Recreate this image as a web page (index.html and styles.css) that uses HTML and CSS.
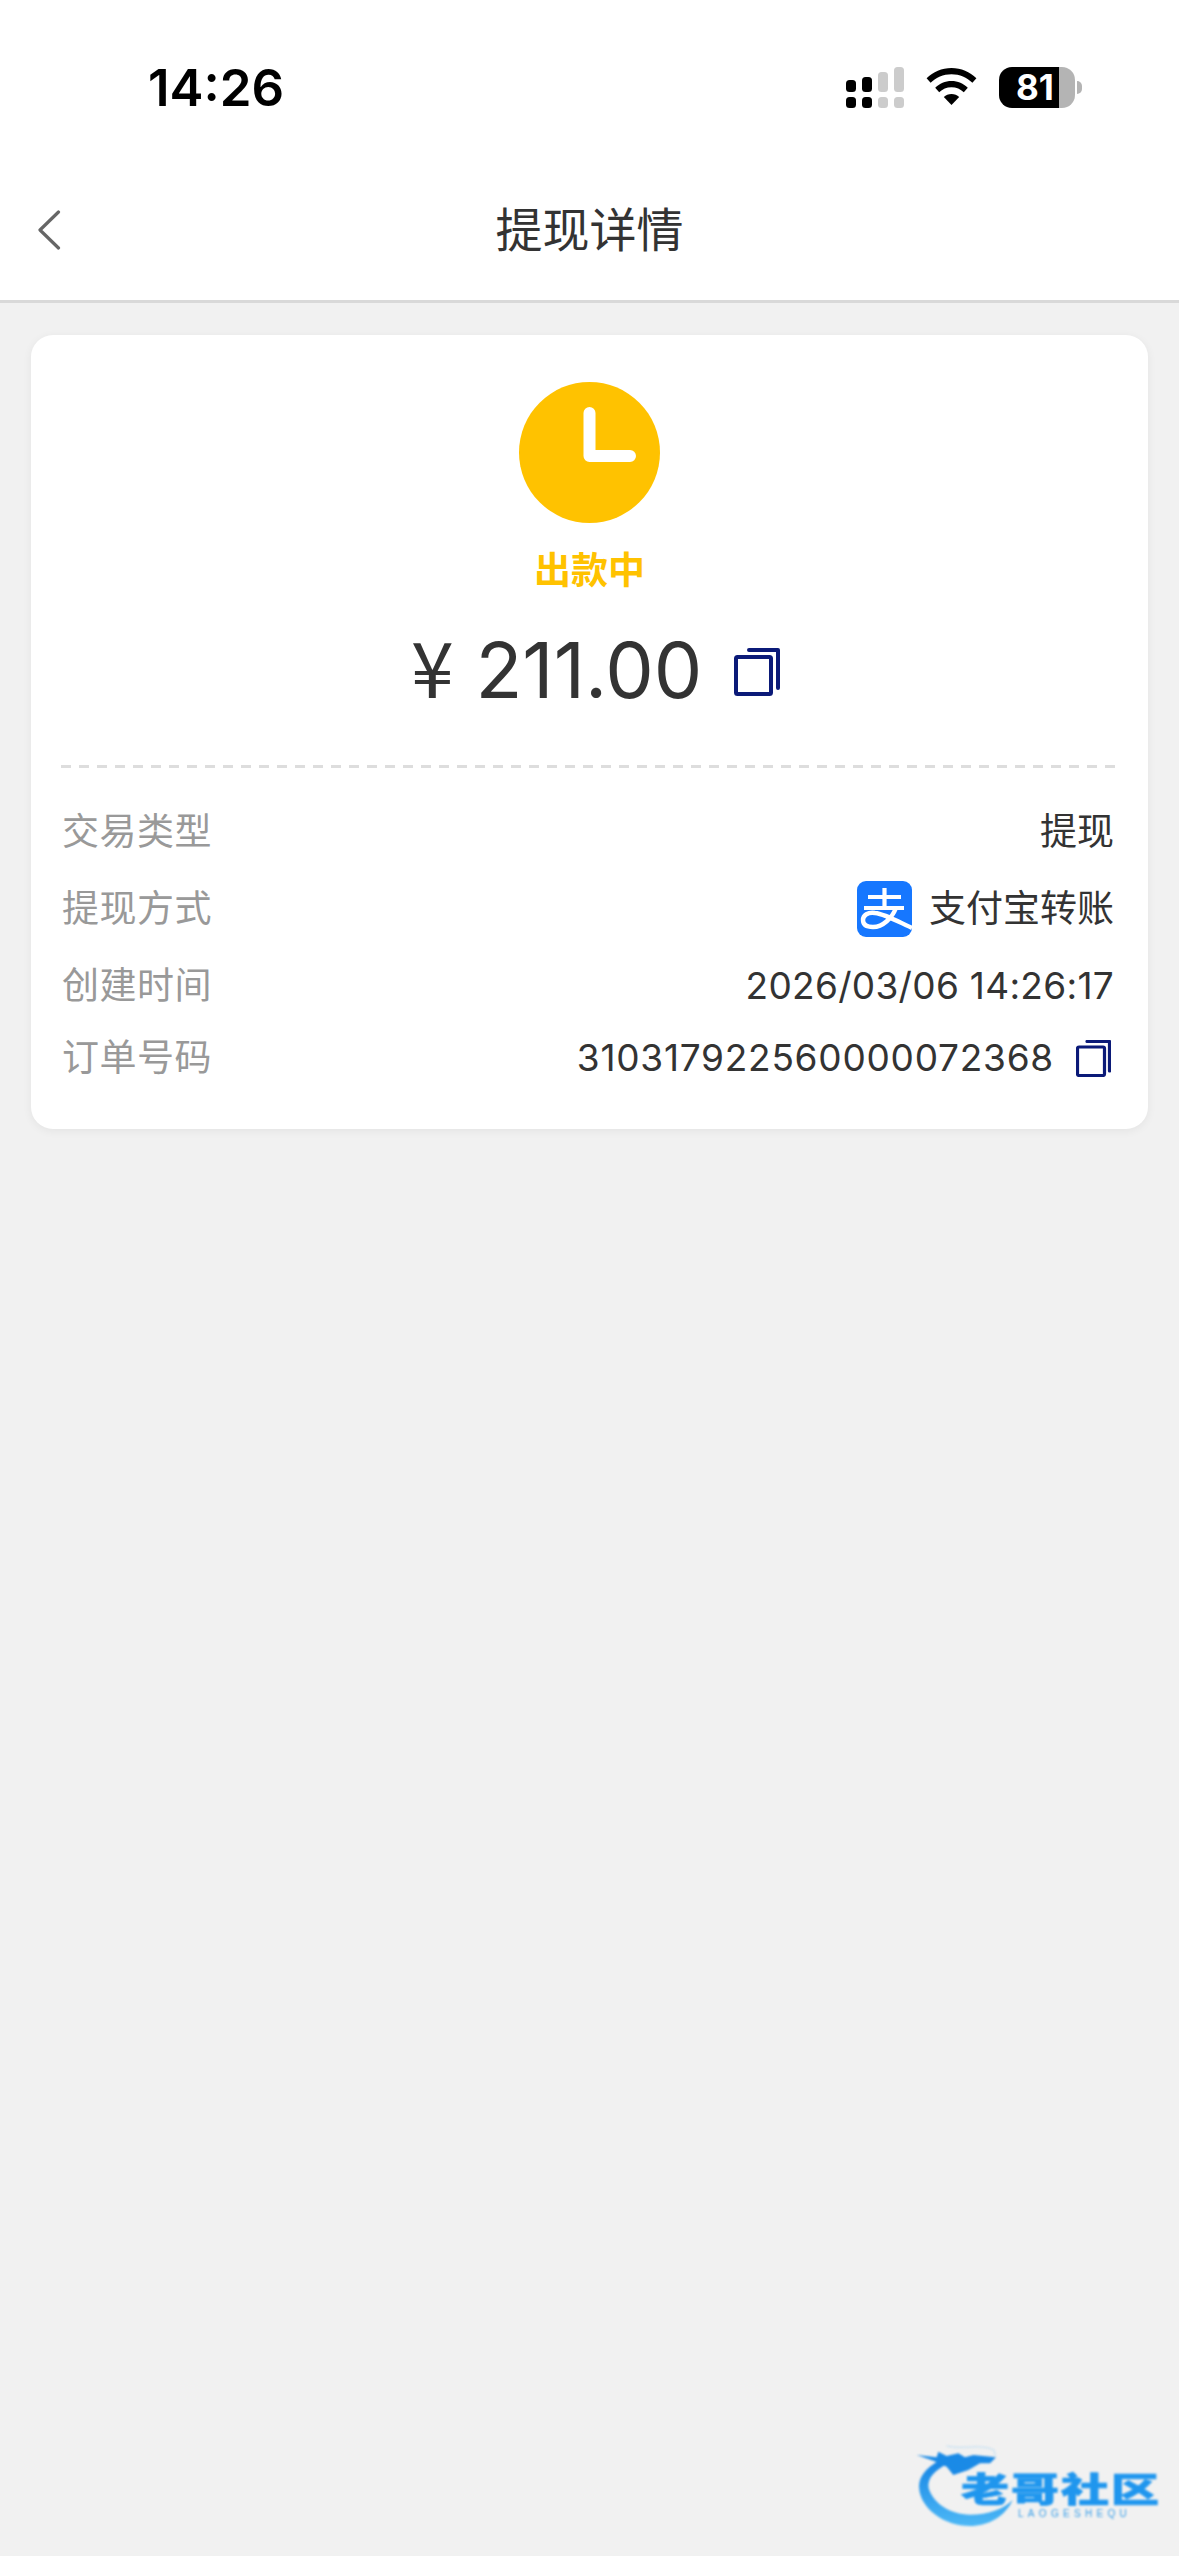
FILE: index.html
```html
<!DOCTYPE html>
<html lang="zh-CN">
<head>
<meta charset="utf-8">
<title>提现详情</title>
<link rel="stylesheet" href="styles.css">
</head>
<body>
<div class="page">
  <header class="statusbar">
    <span class="time">14:26</span>
    <div class="status-icons">
      <svg class="signal" width="58" height="41" viewBox="0 0 58 41">
        <g fill="#000">
          <rect x="0" y="13" width="10" height="12" rx="3.5"/><rect x="0" y="30" width="10" height="11" rx="3.5"/>
          <rect x="16" y="10" width="10" height="15" rx="3.5"/><rect x="16" y="30" width="10" height="11" rx="3.5"/>
        </g>
        <g fill="#ccc">
          <rect x="32" y="5" width="10" height="20" rx="3.5"/><rect x="32" y="30" width="10" height="11" rx="3.5"/>
          <rect x="48" y="0" width="10" height="25" rx="3.5"/><rect x="48" y="30" width="10" height="11" rx="3.5"/>
        </g>
      </svg>
      <svg class="wifi" width="51" height="37" viewBox="0 0 51 37">
        <path d="M25.5 0C15.8 0 7.2 3.8 0.6 10.2L4.6 14.8C10 9.4 17.3 6.2 25.5 6.2S41 9.4 46.4 14.8L50.4 10.2C43.8 3.8 35.2 0 25.5 0Z" fill="#000"/>
        <path d="M25.5 13C19.2 13 13.5 15.5 9.2 19.7L13.2 24.2C16.4 21.1 20.7 19.2 25.5 19.2S34.6 21.1 37.8 24.2L41.8 19.7C37.5 15.5 31.8 13 25.5 13Z" fill="#000"/>
        <path d="M25.5 26C22.5 26 19.8 27.1 17.8 29L25.5 37L33.2 29C31.2 27.1 28.5 26 25.5 26Z" fill="#000"/>
      </svg>
      <div class="battery">
        <div class="battery-body">
          <span class="battery-level">81</span>
        </div>
        <span class="battery-nub"></span>
      </div>
    </div>
  </header>

  <nav class="navbar">
    <svg class="back" width="24" height="40" viewBox="0 0 24 40">
      <path d="M21.5 2L3 20L21.5 38" fill="none" stroke="#666" stroke-width="3.2" stroke-linecap="round" stroke-linejoin="round"/>
    </svg>
    <h1 class="nav-title">提现详情</h1>
  </nav>

  <main class="content">
    <section class="card">
      <svg class="clock" width="141" height="141" viewBox="0 0 141 141">
        <circle cx="70.5" cy="70.5" r="70.5" fill="#ffc200"/>
        <path d="M70.5 31V74H111" fill="none" stroke="#fff" stroke-width="12" stroke-linecap="round" stroke-linejoin="round"/>
      </svg>
      <div class="state">出款中</div>
      <div class="amount-row">
        <span class="amount"><span class="yen">¥</span> 211.00</span>
        <svg class="copy copy-lg" width="46" height="48" viewBox="0 0 46 48">
          <rect x="2" y="9" width="35" height="37" rx="1.5" fill="none" stroke="#0b1a78" stroke-width="4"/>
          <path d="M15 2H44V40" fill="none" stroke="#0b1a78" stroke-width="4" stroke-linecap="round" stroke-linejoin="round"/>
        </svg>
      </div>
      <div class="divider"></div>
      <dl class="rows">
        <div class="row">
          <dt class="label">交易类型</dt>
          <dd class="value">提现</dd>
        </div>
        <div class="row row-icon">
          <dt class="label">提现方式</dt>
          <dd class="value">
            <svg class="alipay" width="55" height="56" viewBox="0 0 55 56">
              <rect width="55" height="56" rx="9" fill="#1677ff"/>
              <g fill="none" stroke="#fff" stroke-width="4.2">
                <path d="M11 16H44M27.5 7V26M7 27H47"/>
                <path d="M39 27C35 37 26 46 16 46C9 46 6 43 6 39C6 34 11 31 18 32C28 33 42 41 55 47" stroke-width="4.4"/>
              </g>
            </svg>
            <span>支付宝转账</span>
          </dd>
        </div>
        <div class="row">
          <dt class="label">创建时间</dt>
          <dd class="value value-date">2026/03/06 14:26:17</dd>
        </div>
        <div class="row">
          <dt class="label">订单号码</dt>
          <dd class="value value-order">
            <span>310317922560000072368</span>
            <svg class="copy copy-sm" width="35" height="37" viewBox="0 0 35 37">
              <rect x="1.5" y="7" width="27" height="28.5" rx="1.5" fill="none" stroke="#0b1a78" stroke-width="3.2"/>
              <path d="M11 1.5H33.5V31" fill="none" stroke="#0b1a78" stroke-width="3.2" stroke-linecap="round" stroke-linejoin="round"/>
            </svg>
          </dd>
        </div>
      </dl>
    </section>
  </main>

  <div class="watermark">
    <svg class="dragon" width="289" height="136" viewBox="0 0 867 408">
      <defs>
        <linearGradient id="dg" x1="0" y1="0" x2="0" y2="1">
          <stop offset="0" stop-color="#1584e4"/>
          <stop offset="1" stop-color="#4db8f6"/>
        </linearGradient>
      </defs>
      <path d="M150 120C105 145 82 175 88 210C95 265 160 318 240 318C295 318 345 290 368 240C340 268 295 284 240 284C180 284 130 250 116 205C110 175 135 150 172 132Z" fill="url(#dg)"/>
      <path d="M80 105L140 112L145 95L170 108L205 100L225 112L250 105L318 112L300 130L270 130L235 150L190 165L170 140L130 122Z" fill="#1a8ae6"/>
      <path d="M170 78C220 90 270 70 312 90L316 108" fill="none" stroke="#bcdcf2" stroke-width="3"/>
    </svg>
    <div class="wm-title">老哥社区</div>
    <div class="wm-sub">LAOGESHEQU</div>
  </div>
</div>
</body>
</html>
```
FILE: styles.css
```css
* { box-sizing: border-box; }
html, body { margin: 0; padding: 0; }
body {
  background: #f1f1f1;
  font-family: Inter, "Noto Sans CJK SC", sans-serif;
  color: #333;
}
.page { position: relative; width: 1179px; height: 2556px; overflow: hidden; }

.statusbar {
  height: 160px;
  background: #fff;
  display: flex;
  justify-content: space-between;
  align-items: flex-start;
  padding: 67px 97px 0 148px;
}
.time { font-size: 51px; line-height: 41px; font-weight: 600; color: #000; }
.status-icons { display: flex; align-items: center; gap: 22px; }
.wifi { margin-top: -2px; }
.battery { display: flex; align-items: center; gap: 2px; }
.battery-body {
  width: 76px; height: 41px; border-radius: 13px; overflow: hidden;
  background: linear-gradient(90deg, #000 0 60px, #b4b4b4 60px);
  display: flex; align-items: center; padding-left: 17px;
}
.battery-level { font-size: 35px; line-height: 41px; font-weight: 700; color: #fff; }
.battery-nub { width: 5px; height: 13px; background: #b4b4b4; border-radius: 0 6px 6px 0; }

.navbar {
  height: 143px;
  background: #fff;
  border-bottom: 3px solid #d9d9d9;
  display: flex;
  align-items: center;
  justify-content: center;
  position: relative;
}
.back { position: absolute; left: 37px; top: 50px; }
.nav-title { margin: 0; font-size: 47px; line-height: 62px; font-weight: 400; color: #333; }

.content { padding: 32px 31px 0; }
.card {
  background: #fff;
  border-radius: 22px;
  box-shadow: 0 2px 10px rgba(0,0,0,.06);
  padding: 47px 30px 48px;
  display: flex;
  flex-direction: column;
  align-items: center;
}
.clock { flex: none; }
.state { margin-top: 24px; font-size: 37px; line-height: 48px; font-weight: 700; color: #ffc200; }
.amount-row { margin-top: 27px; height: 90px; display: flex; align-items: center; gap: 32px; width: 100%; padding-left: 350px; }
.amount { font-size: 77px; line-height: 90px; color: #333; font-weight: 400; white-space: nowrap; }
.yen { font-family: "Noto Sans CJK SC", sans-serif; }
.copy { flex: none; display: block; }
.copy-lg { margin-top: 10px; }
.divider {
  flex: none;
  margin-top: 53px;
  width: 100%;
  height: 3px;
  background: repeating-linear-gradient(90deg, #ddd 0 10px, transparent 10px 18px);
}
.rows { margin: 41px 0 0; width: 100%; display: flex; flex-direction: column; gap: 26px; padding: 0 4px 0 1px; }
.row { display: flex; justify-content: space-between; align-items: center; min-height: 46px; }
.label { font-size: 37px; line-height: 46px; color: #999; letter-spacing: .5px; }
.value { margin: 0; font-size: 37px; line-height: 46px; color: #333; display: flex; align-items: center; gap: 17px; }
.value-date { letter-spacing: .3px; }
.value-order { gap: 22px; letter-spacing: .75px; }
.value-order .copy-sm { margin-right: 3px; }

.watermark { position: absolute; left: 890px; top: 2420px; width: 289px; height: 136px; filter: blur(1.1px); }
.dragon { position: absolute; left: 0; top: 0; }
.wm-title {
  position: absolute; left: 71px; top: 53px;
  font-size: 48px; line-height: 34px; font-weight: 900; color: #1f96ee;
  letter-spacing: 2px; white-space: nowrap;
  -webkit-text-stroke: 1px #1f96ee;
  transform: scaleY(.72);
}
.wm-sub { position: absolute; left: 128px; top: 89px; font-family: "Liberation Sans", sans-serif; font-size: 10px; line-height: 10px; color: #3a9fe8; letter-spacing: 4.3px; white-space: nowrap; }
```
